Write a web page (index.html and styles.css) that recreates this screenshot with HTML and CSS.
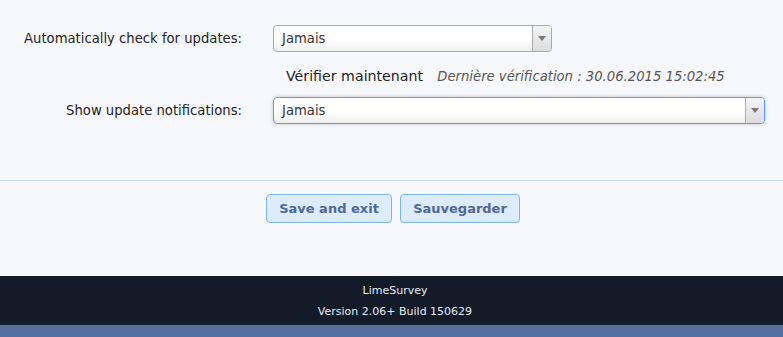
FILE: index.html
```html
<!DOCTYPE html>
<html lang="fr">
<head>
    <meta charset="UTF-8">
    <meta name="viewport" content="width=device-width, initial-scale=1.0">
    <link rel="stylesheet" href="styles.css">
    <title>Global settings - Updates</title>
</head>
<body>
    <div id="settings">
        <div class="form-row">
            <label>Automatically check for updates:</label>
            <div class="select select-short">
                <span>Jamais</span>
                <div class="arrow"><b></b></div>
            </div>
        </div>

        <div class="form-row check-row">
            <span></span>
            <div class="check">
                <a class="check-now">Vérifier maintenant</a>
                <span class="last-check">Dernière vérification : 30.06.2015 15:02:45</span>
            </div>
        </div>

        <div class="form-row">
            <label>Show update notifications:</label>
            <div class="select select-long focused">
                <span>Jamais</span>
                <div class="arrow"><b></b></div>
            </div>
        </div>
    </div>

    <div class="buttons">
        <button type="button">Save and exit</button>
        <button type="button">Sauvegarder</button>
    </div>

    <div id="footer">
        <div>LimeSurvey</div>
        <div>Version 2.06+ Build 150629</div>
    </div>
    <div id="bottomBar"></div>
</body>
</html>
```

FILE: styles.css
```css
html, body {
    margin: 0;
    padding: 0;
}

body {
    background-color: #f7f8fd;
    font-family: "DejaVu Sans", Verdana, sans-serif;
    font-size: 13.2px;
    color: #222;
}

#settings {
    padding-top: 25px;
    height: 155px;
    border-bottom: 1px solid #cfe0f2;
}

.form-row {
    display: grid;
    grid-template-columns: 242px 1fr;
    column-gap: 31px;
    align-items: center;
}

.form-row label {
    text-align: right;
    color: #222;
}

.check-row {
    height: 45px;
}

.check {
    padding-left: 13px;
    padding-top: 3px;
}

.check-now {
    font-size: 14.2px;
    color: #222;
    margin-right: 10px;
}

.last-check {
    font-style: italic;
    color: #555;
}

.select {
    box-sizing: border-box;
    height: 27px;
    display: flex;
    align-items: center;
    border: 1px solid #aaa;
    border-radius: 4px;
    background: linear-gradient(#fff 0%, #fff 55%, #eee 100%);
    color: #333;
    overflow: hidden;
}

.select span {
    flex: 1;
    padding-left: 8px;
}

.select-short {
    width: 279px;
}

.select-long {
    width: 492px;
}

.select.focused {
    border-color: #5897fb;
    box-shadow: 0 0 4px rgba(0, 0, 0, 0.2);
}

.arrow {
    width: 18px;
    height: 100%;
    border-left: 1px solid #aaa;
    background: linear-gradient(#f4f4f4, #ddd);
    display: flex;
    align-items: center;
    justify-content: center;
}

.arrow b {
    width: 0;
    height: 0;
    border-left: 4px solid transparent;
    border-right: 4px solid transparent;
    border-top: 5px solid #777;
}

.buttons {
    display: flex;
    justify-content: center;
    gap: 8px;
    padding-top: 13px;
    height: 95px;
    box-sizing: border-box;
    margin-left: 3px;
}

.buttons button {
    width: 126px;
    height: 29px;
    padding: 0;
    font-family: "DejaVu Sans", Verdana, sans-serif;
    font-size: 13px;
    font-weight: bold;
    color: #4f6896;
    background-color: #dcecfc;
    border: 1px solid #7db5e8;
    border-radius: 4px;
    cursor: pointer;
}

.buttons button + button {
    width: 120px;
}

#footer {
    background-color: #131a28;
    color: #e6ecf4;
    font-size: 11px;
    text-align: center;
    height: 49px;
    box-sizing: border-box;
    padding-top: 4px;
    padding-left: 7px;
    line-height: 21px;
}

#bottomBar {
    background-color: #5570a0;
    height: 12px;
}
```
